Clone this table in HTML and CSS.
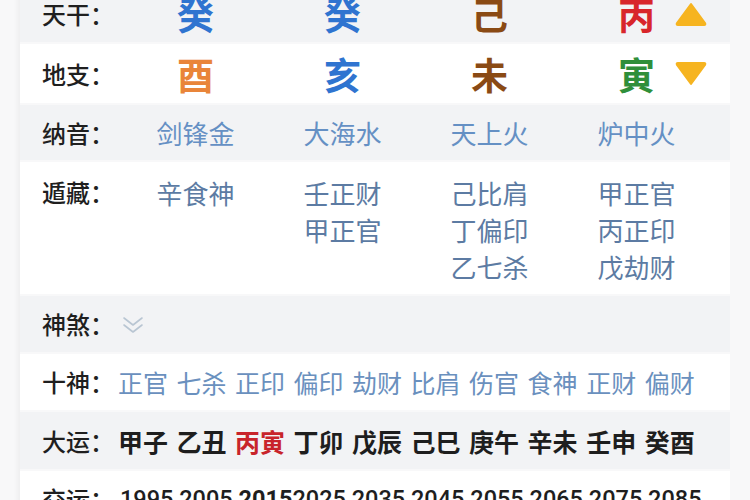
FILE: index.html
```html
<!DOCTYPE html>
<html lang="zh-CN">
<head>
<meta charset="utf-8">
<link rel="stylesheet" href="styles.css">
</head>
<body>
<div class="card">
  <div class="row gray r-gan">
    <div class="label">天干：</div>
    <div class="cols big">
      <span class="c-blue">癸</span><span class="c-blue">癸</span><span class="c-brown">己</span><span class="c-red">丙</span>
    </div>
    <svg class="tri" width="34" height="26" viewBox="0 0 34 26"><path d="M17 3 L31 22 Q32 24 30 24 L4 24 Q2 24 3 22 Z" fill="#f6b420" stroke="#f6b420" stroke-width="2" stroke-linejoin="round"/></svg>
  </div>
  <div class="row white r-zhi">
    <div class="label">地支：</div>
    <div class="cols big">
      <span class="c-orange">酉</span><span class="c-blue">亥</span><span class="c-brown">未</span><span class="c-green">寅</span>
    </div>
    <svg class="tri" width="34" height="26" viewBox="0 0 34 26"><path d="M17 23 L31 4 Q32 2 30 2 L4 2 Q2 2 3 4 Z" fill="#f6b420" stroke="#f6b420" stroke-width="2" stroke-linejoin="round"/></svg>
  </div>
  <div class="row gray r-nayin">
    <div class="label">纳音：</div>
    <div class="cols mid nayin">
      <span>剑锋金</span><span>大海水</span><span>天上火</span><span>炉中火</span>
    </div>
  </div>
  <div class="row white r-cang">
    <div class="label">遁藏：</div>
    <div class="cols mid cang">
      <div class="stack"><span>辛食神</span></div>
      <div class="stack"><span>壬正财</span><span>甲正官</span></div>
      <div class="stack"><span>己比肩</span><span>丁偏印</span><span>乙七杀</span></div>
      <div class="stack"><span>甲正官</span><span>丙正印</span><span>戊劫财</span></div>
    </div>
  </div>
  <div class="row gray r-sha">
    <div class="label">神煞：</div>
    <svg class="chev" width="22" height="18" viewBox="0 0 22 18"><path d="M2 2 L11 9 L20 2 M2 9 L11 16 L20 9" fill="none" stroke="#b9c6d3" stroke-width="1.6" stroke-linecap="round" stroke-linejoin="round"/></svg>
  </div>
  <div class="row white r-shen">
    <div class="label">十神：</div>
    <div class="words shen">
      <span>正官</span><span>七杀</span><span>正印</span><span>偏印</span><span>劫财</span><span>比肩</span><span>伤官</span><span>食神</span><span>正财</span><span>偏财</span>
    </div>
  </div>
  <div class="row gray r-yun">
    <div class="label">大运：</div>
    <div class="words yun">
      <span>甲子</span><span>乙丑</span><span class="hl">丙寅</span><span>丁卯</span><span>戊辰</span><span>己巳</span><span>庚午</span><span>辛未</span><span>壬申</span><span>癸酉</span>
    </div>
  </div>
  <div class="row white r-jiao">
    <div class="label">交运：</div>
    <div class="years">1995 2005 <b>2015</b>2025 2035 2045 2055 2065 2075 2085</div>
  </div>
</div>
</body>
</html>
```

FILE: styles.css
```css
html, body {
  margin: 0;
  padding: 0;
}
body {
  background: #f8f8f9;
  font-family: "Noto Sans CJK SC", "Noto Sans", sans-serif;
  width: 750px;
  height: 500px;
  overflow: hidden;
}
.card {
  margin: -14px 20px 0 20px;
  display: flex;
  flex-direction: column;
  gap: 2px;
  box-shadow: -3px 0 4px rgba(0,0,0,0.04);
}
.row {
  position: relative;
  display: flex;
  align-items: center;
  padding: 0 20px 0 22px;
}
.gray { background: #f2f3f5; }
.white { background: #ffffff; }
.label {
  width: 78px;
  flex: none;
  font-size: 24px;
  font-weight: 500;
  color: #1f1f1f;
  line-height: 30px;
}
.cols {
  display: grid;
  grid-template-columns: repeat(4, 147px);
  margin-left: 2px;
}
.cols > * { text-align: center; }
.big {
  font-size: 37px;
  font-weight: 700;
  line-height: 40px;
}
.c-blue { color: #2f74d0; }
.c-brown { color: #8a4a14; }
.c-red { color: #d8262b; }
.c-orange { color: #e9853a; }
.c-green { color: #2f8f3a; }
.r-gan { height: 56px; }
.r-zhi { height: 59px; }
.r-nayin { height: 55px; }
.r-cang { height: 132px; align-items: flex-start; padding-top: 12px; box-sizing: border-box; }
.r-sha { height: 56px; }
.r-shen { height: 56px; }
.r-yun { height: 57px; }
.r-jiao { height: 60px; align-items: flex-start; padding-top: 13px; box-sizing: border-box; }
.r-cang .label { line-height: 36px; }
.mid {
  font-size: 26px;
  line-height: 37px;
}
.nayin { color: #6590c4; }
.cang { color: #5c7ba3; }
.stack {
  display: flex;
  flex-direction: column;
  align-items: center;
}
.tri {
  position: absolute;
  left: 654px;
  top: 50%;
  transform: translateY(-50%);
}
.chev {
  margin-left: 2px;
  margin-top: 2px;
}
.words {
  display: flex;
  gap: 8.5px;
  font-size: 25px;
  line-height: 30px;
  margin-left: -2px;
}
.shen { color: #6a90be; }
.yun { color: #1e1e1e; font-weight: 700; }
.yun .hl { color: #c8242b; }
.years {
  font-family: Roboto, "Noto Sans", sans-serif;
  font-size: 23.5px;
  color: #1e1e1e;
  font-weight: 500;
  line-height: 30px;
  white-space: pre;
}
.years b { font-weight: 700; }
```
